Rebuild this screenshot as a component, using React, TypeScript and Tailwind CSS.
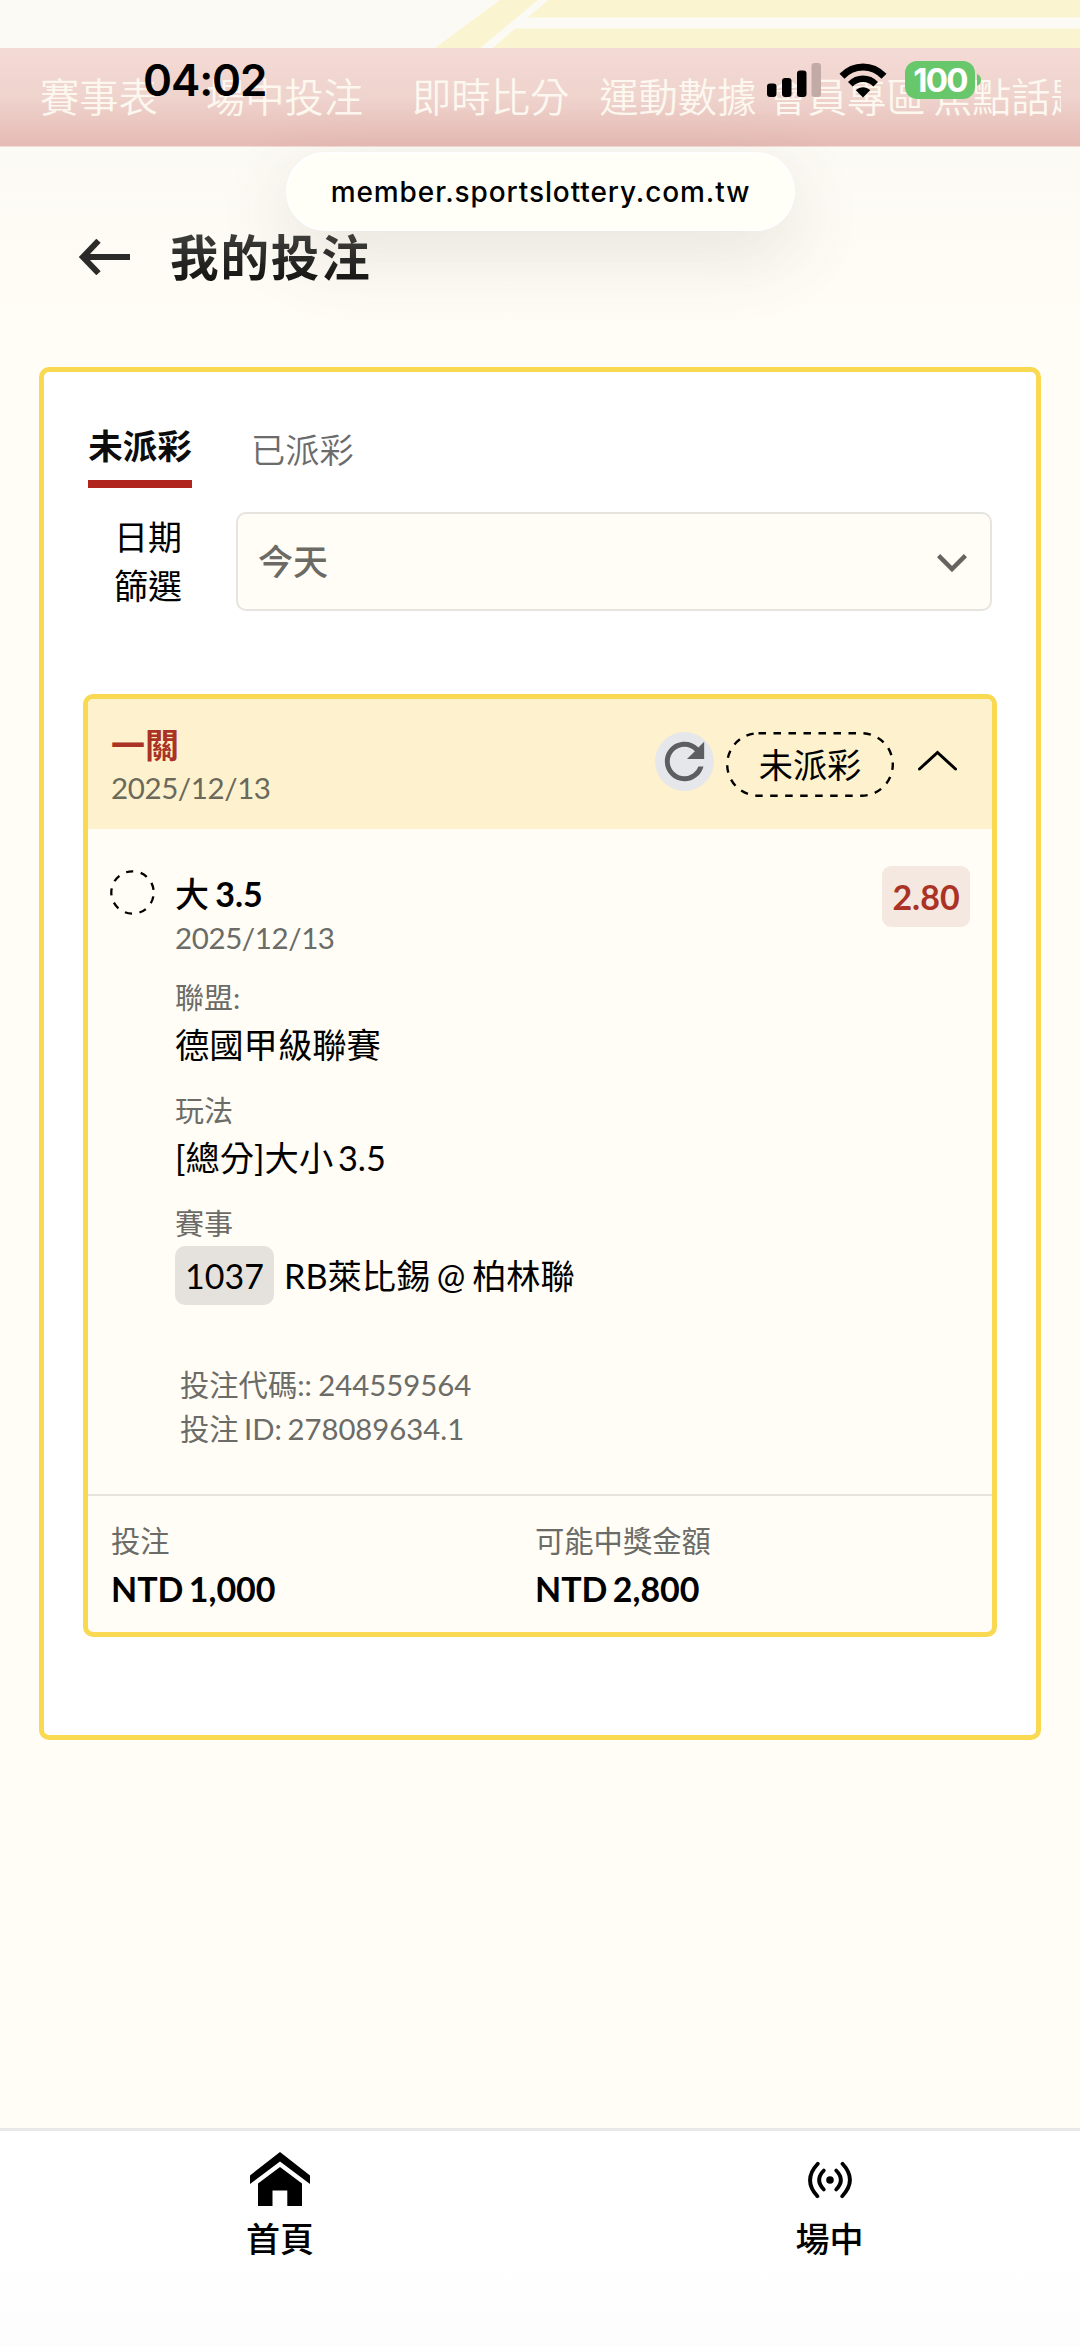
import React from "react";
import { MdRefresh } from "react-icons/md";

const FONT = "font-['Lato','Noto_Sans_CJK_TC',sans-serif]";

function SiteHeader() {
  return (
    <header className="h-12 w-full shrink-0 bg-[#fbfaf5]">
      <svg width="1080" height="48" viewBox="0 0 1080 48" className="block" fill="#faf4d1">
        <path d="M435 48 500 0H538L480 48Z" />
        <path d="M528 17.5 548 0H1080V17.5Z" />
        <path d="M493 48 515 28.5H1080V48Z" />
      </svg>
    </header>
  );
}

function SiteNav() {
  return (
    <nav className="h-[99px] w-full shrink-0 border-b border-[#f3dcd5] bg-linear-to-b from-[#f4dad5] via-[#efd3cd] to-[#e6bbb5] pl-10 pr-[19px]">
      <div className="flex h-full overflow-hidden whitespace-nowrap text-[39.300px] font-[350] leading-[98px] text-[#fcf8ef]">
        <span className="shrink-0">賽事表</span>
        <span className="ml-[48px] shrink-0">場中投注</span>
        <span className="ml-[49px] shrink-0">即時比分</span>
        <span className="ml-[30px] shrink-0">運動數據</span>
        <span className="ml-[12px] shrink-0">會員專區</span>
        <span className="ml-[7px] shrink-0">焦點話題</span>
      </div>
    </nav>
  );
}

function StatusBar() {
  return (
    <div className="absolute inset-x-0 top-[56px] flex h-12 items-center pl-[143px] pr-[99px] font-['Inter',sans-serif]">
      <span className="text-[44px] font-semibold leading-[48px] tracking-[-1.100px] text-black">04:02</span>
      <svg className="ml-auto" width="54" height="34" viewBox="0 0 54 34">
        <rect x="0" y="20.5" width="9.5" height="13.5" rx="3" />
        <rect x="15" y="15" width="9.5" height="19" rx="3" />
        <rect x="30" y="7.5" width="9.5" height="26.5" rx="3" />
        <rect x="44.5" y="0" width="9.5" height="34" rx="3" fill="#c2aba7" />
      </svg>
      <svg className="ml-[18px]" width="48" height="35" viewBox="0 0 48 35" fill="none" stroke="#000">
        <path d="M3 13.2C15 .9 33 .9 45 13.2" strokeWidth="7" />
        <path d="M11.3 21.3C18.5 14 29.500 14 36.700 21.3" strokeWidth="6.500" />
        <path d="M16.800 27.200C21 23.200 27 23.200 31.200 27.200L24 34.500Z" fill="#000" stroke="none" />
      </svg>
      <div className="ml-[18px] flex h-[38px] w-[70px] items-center justify-center rounded-[12px] bg-[#68c76b] text-[33px] font-bold leading-[38px] tracking-[-1.800px] text-white">
        100
      </div>
      <svg className="ml-[2px]" width="4" height="12" viewBox="0 0 4 12">
        <path d="M0 0Q4 1.500 4 6T0 12Z" fill="#68c76b" />
      </svg>
    </div>
  );
}

function AddressPill() {
  return (
    <div className="absolute left-[286px] top-[152px] flex h-[79px] w-[509px] items-center justify-center rounded-full border-2 border-white bg-[#fffff8] font-['Inter',sans-serif] text-[28px] font-medium tracking-[0.900px] text-black shadow-[0_24px_70px_4px_rgba(90,85,75,0.12)]">
      member.sportslottery.com.tw
    </div>
  );
}

function PageTitle() {
  return (
    <div className="flex h-[220px] shrink-0 items-start bg-linear-to-b from-[#fcfaf4] to-[#fffdf6] pl-[79px] pt-[75px]">
      <svg className="mt-[17px]" width="51" height="36" viewBox="0 0 51 36" fill="none" stroke="#2b2b29" strokeWidth="6">
        <path d="M3 18H51M19.500 1.800 4 18 19.500 34.200" />
      </svg>
      <h1 className="ml-[40px] bg-linear-to-b from-[#4a4a47] to-[#0c0c0b] bg-clip-text text-[48.500px] font-bold leading-[70px] tracking-[1.900px] text-transparent">
        我的投注
      </h1>
    </div>
  );
}

function Tabs() {
  return (
    <div className="flex h-[116px] pl-11">
      <div className="flex w-[104px] flex-col justify-end">
        <span className="text-center text-[34.500px] font-bold leading-[50px] text-[#0c0c0c]">未派彩</span>
        <span className="mt-[9px] h-2 bg-[#b0261f]" />
      </div>
      <span className="ml-[59px] mt-[53px] text-[34.200px] font-[350] leading-[50px] text-[#6b6b6b]">已派彩</span>
    </div>
  );
}

function DateFilter() {
  return (
    <div className="mt-6 flex h-[99px]">
      <div className="ml-[70px] w-[68px] whitespace-nowrap text-[34px] leading-[49px] text-black">
        <div>日期</div>
        <div>篩選</div>
      </div>
      <div className="ml-[54px] flex w-[756px] items-center justify-between rounded-[10px] border-[2.500px] border-[#e6e4de] bg-[#fffdf6] pl-5 pr-[23px]">
        <span className="-mt-[2px] text-[35px] font-medium leading-[50px] text-[#6b6a64]">今天</span>
        <svg className="mt-[2px]" width="30" height="18" viewBox="0 0 30 18" fill="none" stroke="#666460" strokeWidth="4.500">
          <path d="M1.600 1.600 15 15 28.400 1.600" />
        </svg>
      </div>
    </div>
  );
}

function BetHeader() {
  return (
    <div className="flex h-[130px] bg-[#fdf2cd] pl-[23px]">
      <div className="pt-[26px]">
        <div className="h-10 text-[34px] font-bold leading-10 text-[#ab3325]">一關</div>
        <div className="mt-[3px] h-10 text-[29.500px] leading-10 tracking-[-0.400px] text-[#6b695c]">2025/12/13</div>
      </div>
      <div className="ml-auto mr-[35px] mt-[33px] flex h-[65px] items-start">
        <div className="flex size-[59px] items-center justify-center rounded-full bg-[#e6e7ea]">
          <MdRefresh size={59} color="#5c5e60" />
        </div>
        <div className="relative ml-3 flex h-[65px] w-[168px] items-center justify-center">
          <svg className="absolute inset-0" width="168" height="65" viewBox="0 0 168 65" fill="none">
            <rect x="1.200" y="1.200" width="165.600" height="62.600" rx="31.300" stroke="#000" strokeWidth="2.400" strokeDasharray="7.500 7.500" />
          </svg>
          <span className="text-[34.200px] leading-[63px] text-black">未派彩</span>
        </div>
        <svg className="ml-6 mt-[18px]" width="39" height="21" viewBox="0 0 39 21" fill="none" stroke="#000" strokeWidth="3" strokeLinecap="round">
          <path d="M1.500 19 19.500 2.500 37.500 19" />
        </svg>
      </div>
    </div>
  );
}

function Field({ label, value, className }: { label: string; value: string; className: string }) {
  return (
    <div className={className}>
      <div className="h-9 text-[29px] leading-9 text-[#6b6b67]">{label}</div>
      <div className="mt-[7px] h-11 text-[34.300px] leading-[44px] text-black [word-spacing:-4px]">{value}</div>
    </div>
  );
}

function BetBody() {
  return (
    <div className="flex h-[665px] pl-[22px] pr-[22px]">
      <svg className="mt-[41px] shrink-0" width="45" height="45" viewBox="0 0 45 45" fill="none">
        <circle cx="22.500" cy="22.500" r="21.200" stroke="#000" strokeWidth="2.300" strokeDasharray="7.200 7.600" strokeDashoffset="-4" />
      </svg>
      <div className="ml-5 flex-1 pt-[43px]">
        <div className="h-11 text-[34px] font-bold leading-[44px] text-black [word-spacing:-2px]">
          <span className="font-medium">大</span> 3.5
        </div>
        <div className="mt-[2px] h-10 text-[29.500px] leading-10 tracking-[-0.400px] text-[#6b6b67]">2025/12/13</div>
        <Field className="mt-[22px]" label="聯盟:" value="德國甲級聯賽" />
        <Field className="mt-[26px]" label="玩法" value="[總分]大小 3.5" />
        <div className="mt-[26px] h-9 text-[29px] leading-9 text-[#6b6b67]">賽事</div>
        <div className="mt-1 flex h-[59px] items-center">
          <span className="flex h-[59px] w-[99px] items-center justify-center rounded-[10px] bg-[#e5e2dd] text-[34px] text-black">1037</span>
          <span className="ml-[10px] text-[34.200px] leading-[59px] text-black [word-spacing:-2px]">RB萊比錫 @ 柏林聯</span>
        </div>
        <div className="ml-[5px] mt-[58px] text-[29.300px] leading-[44px] text-[#6b6b67]">
          <div className="[word-spacing:-1px]">投注代碼:: 244559564</div>
          <div className="[word-spacing:-2px]">投注 ID: 278089634.1</div>
        </div>
      </div>
      <span className="mt-[37px] flex h-[61px] w-[88px] items-center justify-center rounded-[9px] bg-[#f5e8e0] text-[34px] font-bold text-[#ab3325]">
        2.80
      </span>
    </div>
  );
}

function BetFooter() {
  return (
    <div className="flex flex-1 border-t-[2.500px] border-[#e7e4df] pl-[23px] pt-[27px]">
      <div className="w-[424px]">
        <div className="h-9 text-[29.300px] leading-9 text-[#6b6b67]">投注</div>
        <div className="mt-[8px] h-11 text-[34px] font-bold leading-[44px] text-black [word-spacing:-3px]">NTD 1,000</div>
      </div>
      <div>
        <div className="h-9 text-[29.300px] leading-9 text-[#6b6b67]">可能中獎金額</div>
        <div className="mt-[8px] h-11 text-[34px] font-bold leading-[44px] text-black [word-spacing:-3px]">NTD 2,800</div>
      </div>
    </div>
  );
}

function BottomNav() {
  return (
    <footer className="mt-auto flex h-[219px] shrink-0 overflow-hidden border-t-[3px] border-[#e8e9e8] bg-linear-to-b from-white via-white to-[#fdfdfd] text-[34px] font-medium leading-[50px] text-black">
      <a className="flex w-[560px] shrink-0 flex-col items-center pt-[21px]">
        <svg width="60" height="54" viewBox="0 0 60 54">
          <path d="M30 0 60 23.500V32L30 9.500 0 32V23.500Z" />
          <path d="M30 15 52 31.500V54H37.300V38.500H22.500V54H8V31.500Z" />
        </svg>
        <span className="mt-[8px]">首頁</span>
      </a>
      <a className="flex w-[539px] shrink-0 flex-col items-center pt-[21px]">
        <svg width="60" height="54" viewBox="0 0 60 54" fill="none" stroke="#000" strokeWidth="3.800" strokeLinecap="round">
          <circle cx="30" cy="28" r="3.800" fill="#000" stroke="none" />
          <path d="M23.800 18.500Q14.500 28 23.800 37.500M36.200 18.500Q45.500 28 36.200 37.500" />
          <path d="M17.800 11.800Q2.500 28 17.400 44.200M42.500 11.800Q57.500 28 42.200 44.200" />
        </svg>
        <span className="mt-[8px]">場中</span>
      </a>
    </footer>
  );
}

export default function App() {
  return (
    <div lang="zh-Hant" className={`relative flex h-[2347px] w-[1080px] flex-col overflow-hidden bg-[#fffdf6] ${FONT}`}>
      <SiteHeader />
      <SiteNav />
      <PageTitle />
      <main className="mx-[39px] h-[1373px] shrink-0 rounded-[10px] border-[5px] border-[#f9d852] bg-white">
        <Tabs />
        <DateFilter />
        <section className="ml-[39px] mt-[83px] flex h-[943px] w-[914px] flex-col overflow-hidden rounded-[10px] border-[5px] border-[#f9d852] bg-[#fffdf6]">
          <BetHeader />
          <BetBody />
          <BetFooter />
        </section>
      </main>
      <BottomNav />
      <AddressPill />
      <StatusBar />
    </div>
  );
}
